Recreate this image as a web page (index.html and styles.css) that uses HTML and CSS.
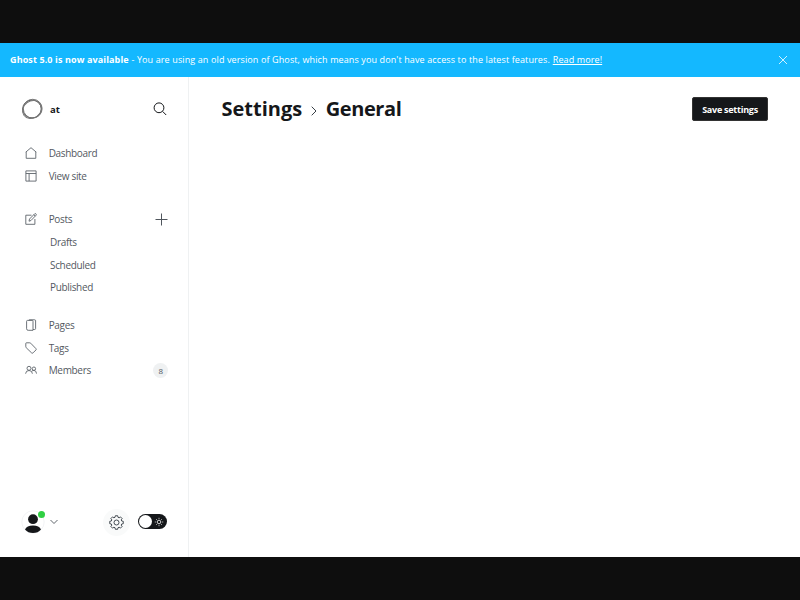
FILE: index.html
```html
<!DOCTYPE html>
<html lang="en">
<head>
<meta charset="utf-8">
<title>Settings - General</title>
<link rel="stylesheet" href="styles.css">
</head>
<body>
<div class="app">
  <div class="banner">
    <p class="banner-text"><strong>Ghost 5.0 is now available</strong><span class="banner-message">- You are using an old version of Ghost, which means you don't have access to the latest features.</span><a class="banner-link">Read more!</a></p>
    <svg class="banner-close" viewBox="0 0 10 10"><path d="M1 1l8 8M9 1L1 9"/></svg>
  </div>
  <div class="columns">
    <nav class="sidebar">
      <header class="site">
        <svg class="site-logo" viewBox="0 0 22 22"><ellipse cx="11" cy="11" rx="9.3" ry="9" stroke="#444"/><ellipse cx="11.7" cy="10.7" rx="9.4" ry="9.4" stroke="#777"/><ellipse cx="10.8" cy="11.4" rx="10" ry="8.5" stroke="#777" transform="rotate(-35 11 11)"/></svg>
        <span class="site-name">at</span>
        <svg class="search" viewBox="0 0 14 14"><circle cx="6" cy="5.8" r="4.9"/><path d="M9.6 9.4l3.6 3.6"/></svg>
      </header>
      <ul class="menu">
        <li><svg class="icon" viewBox="0 0 12 12"><path d="M.8 5.1L6 .7l5.2 4.4M1.2 4.8v6.5h9.6V4.8"/></svg><span>Dashboard</span></li>
        <li><svg class="icon" viewBox="0 0 12 12"><path d="M.9.9h10.2v10.2H.9zM.9 3.5h10.2M4.1 3.5v7.6"/></svg><span>View site</span></li>
      </ul>
      <ul class="menu menu-posts">
        <li><svg class="icon" viewBox="0 0 12 12"><path d="M6.5 2.2H.8v9.1h9.1V6M4 8.2l.5-2.2L9.7.8q.7-.5 1.3.1t.1 1.3L6 7.5zM8.8 1.7l1.5 1.5"/></svg><span>Posts</span><svg class="plus" viewBox="0 0 13 13"><path d="M6.5.5v12M.5 6.5h12"/></svg></li>
        <li class="sub"><span>Drafts</span></li>
        <li class="sub"><span>Scheduled</span></li>
        <li class="sub"><span>Published</span></li>
      </ul>
      <ul class="menu menu-content">
        <li><svg class="icon" viewBox="0 0 12 12"><path d="M8 2.300v9H3.200q-1.600 0-1.600-1.500V2.300q0-.9.900-.9h4.600q.9 0 .9.900M4.200 1.300V.8h5.500q.9 0 .9.900v7.800q0 1-1 1H8"/></svg><span>Pages</span></li>
        <li><svg class="icon" viewBox="0 0 12 12"><path d="M.8 1.400q0-.6.6-.6h3.400q.5 0 .9.400l5.200 5.400q.7.700 0 1.400L8 10.900q-.7.700-1.400 0L1.200 5.700q-.4-.4-.4-.9z"/></svg><span>Tags</span></li>
        <li><svg class="icon" viewBox="0 0 12 12"><circle cx="4" cy="4.300" r="2"/><circle cx="8.900" cy="4.700" r="1.700"/><path d="M.6 9.700q.2-3.200 3.400-3.200t3.400 3.200M7 7q1-.7 2-.6 2.300.1 2.500 3.200"/></svg><span>Members</span><span class="count">8</span></li>
      </ul>
      <footer class="account">
        <div class="avatar"><svg viewBox="0 0 24 24"><circle class="ring" cx="12" cy="12" r="11.2"/><circle cx="12" cy="9.2" r="4.9"/><path d="M4 19.5q1.700-4 8-4t8 4Q17 23 12 23t-8-3.500z"/></svg><i class="online"></i></div>
        <svg class="chevron" viewBox="0 0 8 6"><path d="M.5 1L4 4.500 7.500 1"/></svg>
        <div class="gear-button"><svg viewBox="-12 -12 24 24"><circle r="4"/><path d="M-2.400-8.300L-1.900-10.800H1.900L2.400-8.300 4.200-7.500 6.300-9 9-6.300 7.500-4.200 8.300-2.400 10.800-1.900V1.900L8.300 2.400 7.500 4.200 9 6.300 6.300 9 4.200 7.500 2.400 8.300 1.900 10.800H-1.900L-2.400 8.300-4.200 7.500-6.300 9-9 6.300-7.500 4.200-8.300 2.400-10.800 1.900V-1.900L-8.300-2.400-7.500-4.200-9-6.300-6.300-9-4.200-7.500z"/></svg></div>
        <div class="toggle"><i class="knob"></i><svg viewBox="0 0 10 10"><circle cx="5" cy="5" r="1.800"/><path d="M5 .8v1M5 8.200v1M.8 5h1M8.200 5h1M2 2l.7.700M7.300 7.300l.7.700M2 8l.7-.7M7.300 2.700L8 2"/></svg></div>
      </footer>
    </nav>
    <main class="content">
      <h1><span>Settings</span><svg class="crumb" viewBox="0 0 6 10"><path d="M.7.700L5 5 .7 9.300"/></svg><span class="current">General</span></h1>
      <button class="save"><span>Save settings</span></button>
    </main>
  </div>
</div>
</body>
</html>
```
FILE: styles.css
```css
* { box-sizing: border-box; }
body { margin: 0; background: #0e0e0e; font-family: "Open Sans", "Noto Sans", sans-serif; }
svg { fill: none; stroke: #394047; flex: none; display: block; }
ul { list-style: none; margin: 0; padding: 0; }
.app { height: 600px; padding: 43px 0; display: flex; flex-direction: column; }
.banner { height: 34px; background: #14b8ff; color: #fff; display: flex; align-items: center; justify-content: space-between; padding: 0 12px 1px 10px; flex: none; }
.banner-text { margin: 0; font-size: 9px; line-height: 14px; white-space: nowrap; display: flex; gap: 2.8px; letter-spacing: .115px; }
.banner-link { text-decoration: underline; }
.banner-close { width: 10px; height: 10px; stroke: #fff; stroke-width: .8; }
.columns { flex: 1; display: flex; background: #fff; min-height: 0; }
.sidebar { width: 189px; border-right: 1px solid #eff1f2; display: flex; flex-direction: column; padding: 21px 20px 20px 21px; }
.site { display: flex; align-items: center; height: 22px; }
.site-logo { width: 22px; height: 22px; stroke-width: 1; }
.site-name { font-size: 9.5px; font-weight: 700; color: #15171a; margin-left: 7px; }
.search { width: 14px; height: 14px; margin-left: auto; margin-right: 1px; stroke: #15171a; }
.menu { margin-top: 21.5px; font-size: 10px; letter-spacing: -.33px; color: #54595f; }
.menu-posts { margin-top: 21px; }
.menu-content { margin-top: 15px; }
.menu li { height: 22.7px; display: flex; align-items: center; padding-left: 4px; }
.menu .sub { padding-left: 29px; }
.icon { width: 12px; height: 12px; margin-right: 11.7px; stroke: #5d646b; stroke-width: .9; }
.plus { width: 13px; height: 13px; margin-left: auto; stroke: #50565d; }
.count { margin-left: auto; width: 15px; height: 15px; border-radius: 50%; background: #eff1f2; font-size: 8px; line-height: 15px; text-align: center; }
.account { margin-top: auto; display: flex; align-items: center; height: 30px; }
.avatar { position: relative; width: 24px; height: 24px; }
.avatar svg { width: 24px; height: 24px; fill: #15171a; stroke: none; }
.avatar .ring { fill: #fff; stroke: #eceef0; stroke-width: .7; }
.online { position: absolute; right: 0; top: 1px; width: 7px; height: 7px; border-radius: 50%; background: #30cf43; }
.chevron { width: 8px; height: 6px; margin-left: 5px; stroke-width: .8; }
.gear-button { width: 27px; height: 27px; margin-left: 45px; border-radius: 50%; background: #f9fafa; display: grid; place-items: center; }
.gear-button svg { width: 15px; height: 15px; stroke-width: 1.5; stroke-linejoin: round; }
.toggle { width: 29px; height: 15px; margin: 0 0 1px 8.3px; border-radius: 8px; background: #15171a; display: flex; align-items: center; justify-content: space-between; padding: 0 3px 0 1px; }
.knob { width: 13px; height: 13px; border-radius: 50%; background: #fff; }
.toggle svg { width: 10px; height: 10px; stroke: #fff; stroke-width: .8; }
.content { flex: 1; display: flex; align-items: flex-start; justify-content: space-between; padding: 20px 32px 0 32.5px; }
h1 { margin: 0; display: flex; align-items: center; font-size: 20px; line-height: 24px; font-weight: 700; color: #15171a; }
.current { letter-spacing: -.4px; }
.crumb { width: 6px; height: 10px; margin: 3px 9px 0 8.5px; }
.save { width: 76px; height: 24px; padding: 1px 0 0; border: 1px solid #333; border-radius: 2px; background: #15171a; color: #fff; font: 700 9px/21px "Open Sans", "Noto Sans", sans-serif; letter-spacing: -.25px; white-space: nowrap; }
```
